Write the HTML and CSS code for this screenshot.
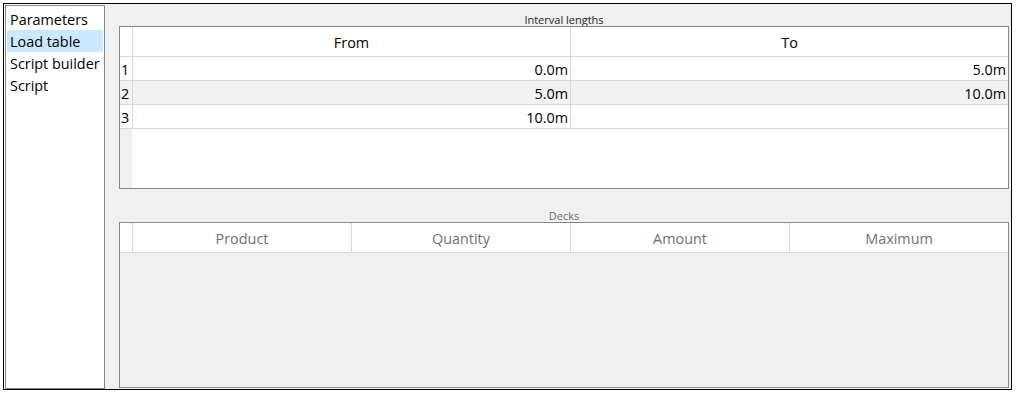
FILE: index.html
```html
<!DOCTYPE html>
<html>
<head>
<meta charset="utf-8">
<link rel="stylesheet" href="styles.css">
</head>
<body>
<div class="window">
  <div class="sidebar">
    <div class="nav-item">Parameters</div>
    <div class="nav-item selected">Load table</div>
    <div class="nav-item">Script builder</div>
    <div class="nav-item">Script</div>
  </div>
  <div class="panel">
    <div class="group-label">Interval lengths</div>
    <div class="table intervals">
      <div class="row head">
        <div class="rh"></div>
        <div class="cell center sep">From</div>
        <div class="cell center">To</div>
      </div>
      <div class="row">
        <div class="rh">1</div>
        <div class="cell right sep">0.0m</div>
        <div class="cell right">5.0m</div>
      </div>
      <div class="row alt">
        <div class="rh">2</div>
        <div class="cell right sep">5.0m</div>
        <div class="cell right">10.0m</div>
      </div>
      <div class="row">
        <div class="rh">3</div>
        <div class="cell right sep">10.0m</div>
        <div class="cell right"></div>
      </div>
      <div class="filler">
        <div class="rh-fill"></div>
        <div class="data-fill"></div>
      </div>
    </div>
    <div class="group-label muted decks-label">Decks</div>
    <div class="table decks">
      <div class="row head">
        <div class="rh"></div>
        <div class="cell center sep">Product</div>
        <div class="cell center sep">Quantity</div>
        <div class="cell center sep">Amount</div>
        <div class="cell center">Maximum</div>
      </div>
      <div class="empty-body"></div>
    </div>
  </div>
</div>
</body>
</html>
```

FILE: styles.css
```css
html, body {
  margin: 0;
  padding: 0;
  background: #ffffff;
}

body {
  font-family: "Open Sans", "Noto Sans", sans-serif;
  font-size: 14.4px;
  color: #000;
}

.window {
  margin: 3px 0 0 3px;
  width: 1009px;
  height: 387px;
  box-sizing: border-box;
  border: 1px solid #000;
  display: flex;
  background: #fff;
}

.sidebar {
  box-sizing: border-box;
  width: 100px;
  height: 384px;
  margin: 1px 0 0 1px;
  border: 1px solid #828790;
  background: #fff;
  padding: 2px 0 0 1px;
}

.nav-item {
  height: 22px;
  line-height: 24px;
  width: 96px;
  padding-left: 3px;
  box-sizing: border-box;
  border-radius: 2px;
  white-space: nowrap;
  overflow: visible;
}

.nav-item.selected {
  background: #cce8ff;
}

.panel {
  flex: 1;
  background: #f0f0f0;
  padding: 8px 2px 1px 14px;
  display: flex;
  flex-direction: column;
}

.group-label {
  font-size: 11px;
  line-height: 16px;
  height: 14px;
  text-align: center;
  color: #1e1e1e;
  width: 890px;
}

.group-label.muted {
  color: #6d6d6d;
}

.decks-label {
  margin-top: 19px;
}

.table {
  box-sizing: border-box;
  width: 890px;
  border: 1px solid #828790;
  display: flex;
  flex-direction: column;
}

.intervals {
  height: 163px;
  background: #fff;
}

.decks {
  height: 166px;
  background: #efefef;
}

.row {
  display: grid;
  height: 24px;
  box-sizing: border-box;
  border-bottom: 1px solid #d9d9d9;
  background: #fff;
}

.intervals .row {
  grid-template-columns: 13px 438px 437px;
}

.decks .row {
  grid-template-columns: 13px 219px 219px 219px 218px;
}

.row.head {
  height: 30px;
}

.row.alt {
  background: #f2f2f2;
}

.rh {
  box-sizing: border-box;
  border-right: 1px solid #d9d9d9;
  padding-left: 1px;
  line-height: 23px;
  padding-top: 1px;
}

.cell {
  box-sizing: border-box;
  line-height: 23px;
  padding-top: 1px;
  white-space: nowrap;
  overflow: hidden;
}

.row.head .cell {
  line-height: 29px;
  padding-top: 1px;
}

.cell.sep {
  border-right: 1px solid #d9d9d9;
}

.cell.center {
  text-align: center;
}

.cell.right {
  text-align: right;
  padding-right: 2px;
}

.decks .row.head .cell {
  color: #707070;
}

.filler {
  flex: 1;
  display: grid;
  grid-template-columns: 12px 1fr;
}

.rh-fill {
  background: #f0f0f0;
}

.data-fill {
  background: #fff;
}

.empty-body {
  flex: 1;
  background: #efefef;
}
```
